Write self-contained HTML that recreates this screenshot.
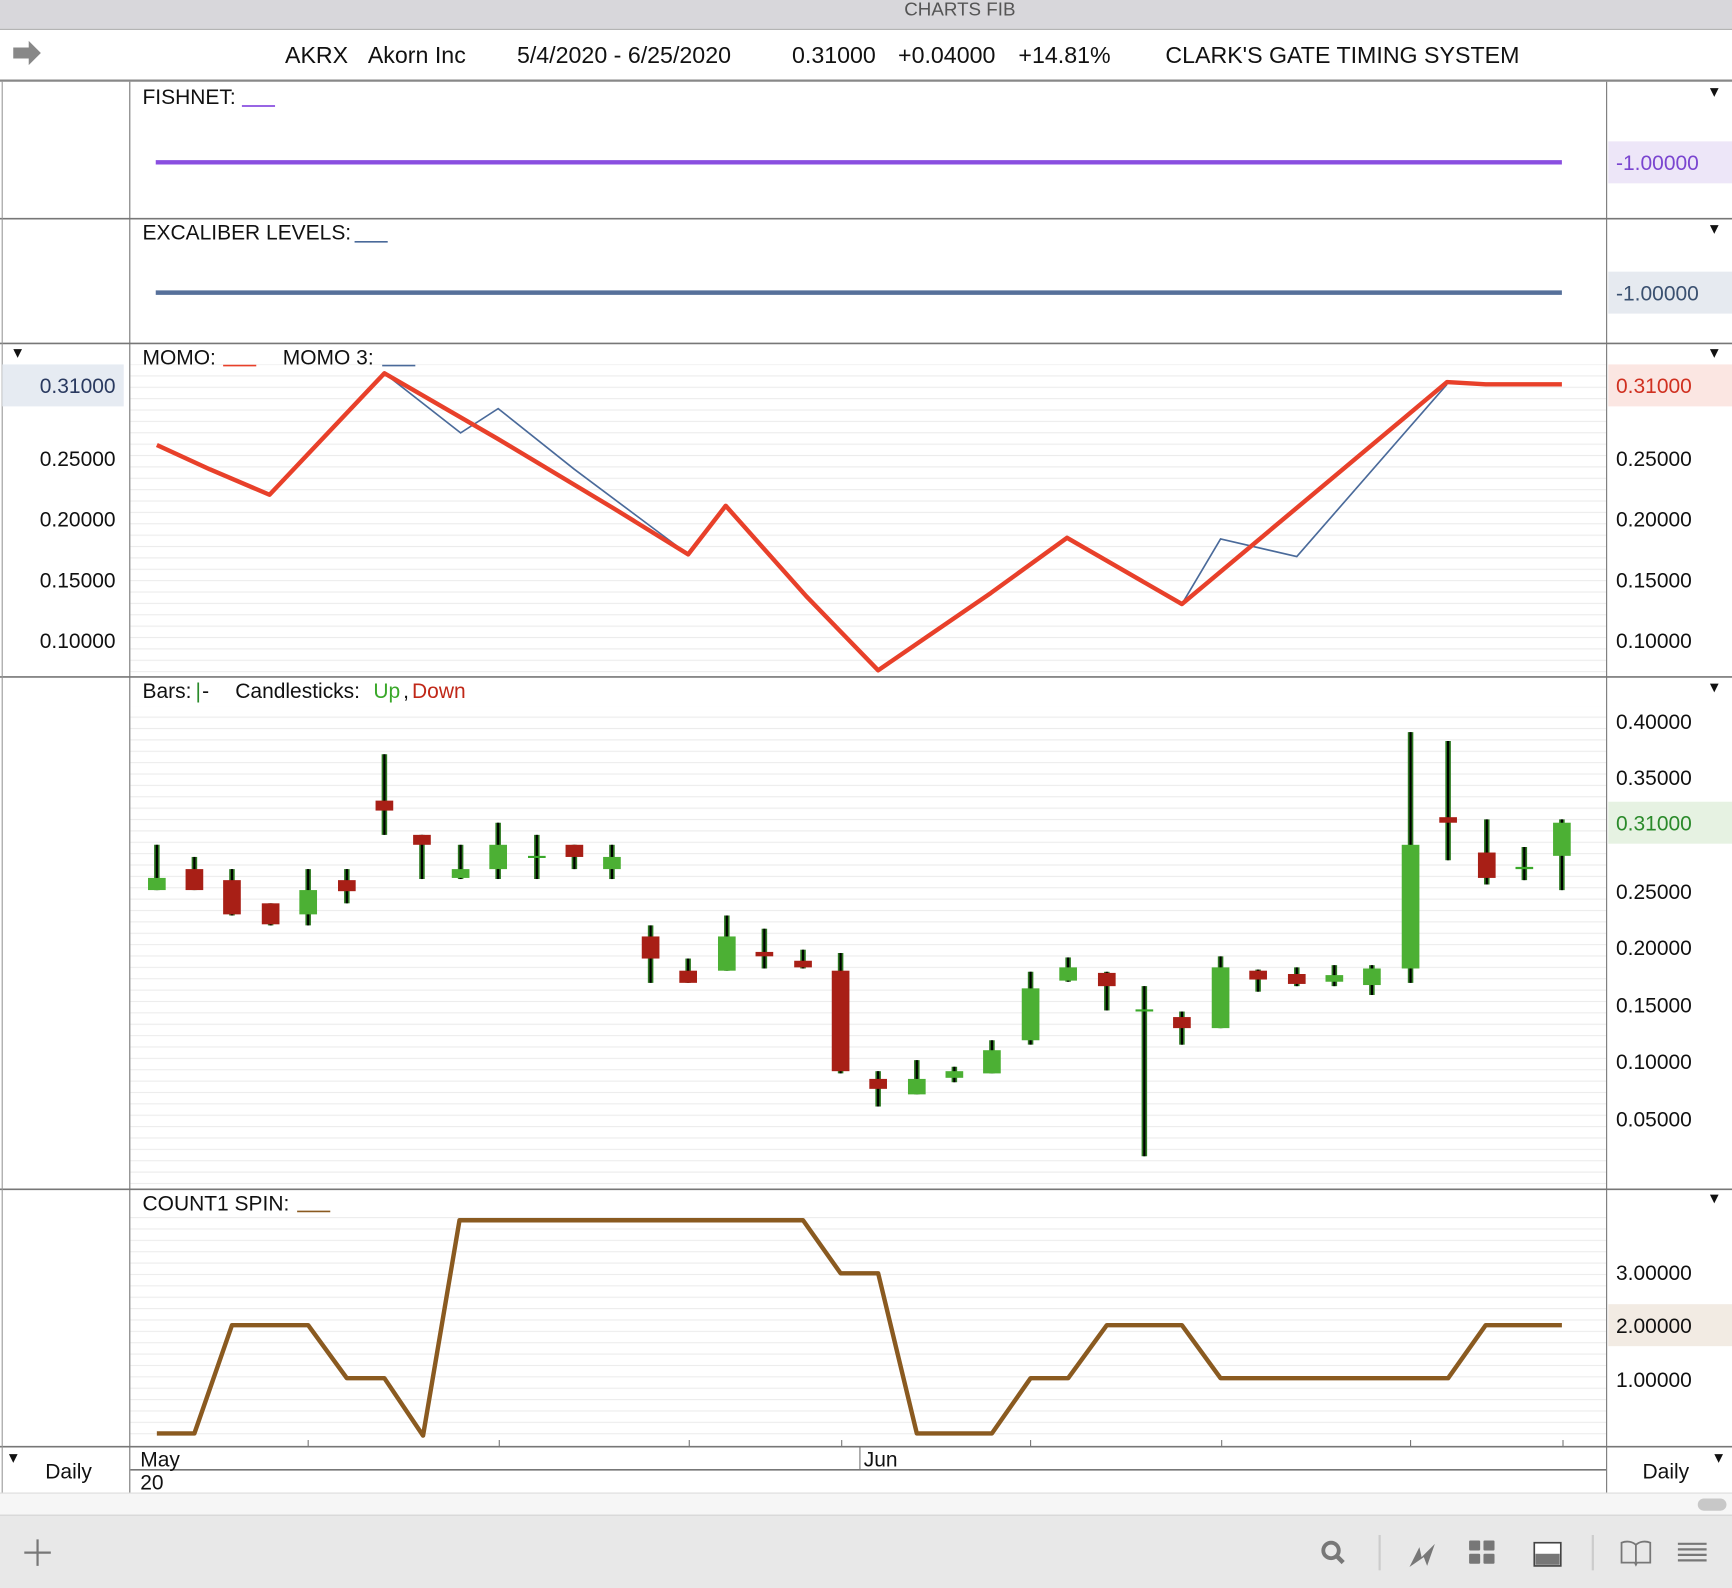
<!DOCTYPE html>
<html><head><meta charset="utf-8"><style>
html,body{margin:0;padding:0;background:#fff;}
svg{display:block;}
text{font-family:"Liberation Sans",Arial,sans-serif;}
</style></head><body>
<svg width="1732" height="1588" viewBox="0 0 1568 1438" preserveAspectRatio="none" xmlns="http://www.w3.org/2000/svg">
<defs>
<pattern id="g" width="10" height="10.3" patternUnits="userSpaceOnUse"><line x1="0" y1="0.5" x2="10" y2="0.5" stroke="#ececec" stroke-width="1"/></pattern>
</defs>
<rect width="1568" height="1438" fill="#fff"/>
<rect width="1568" height="26" fill="#d8d7db"/>
<text x="869" y="14" font-size="17" fill="#555" text-anchor="middle">CHARTS FIB</text>
<line x1="0" y1="26.5" x2="1568" y2="26.5" stroke="#aaa"/>
<path d="M12 43h14v-6l11 11-11 11v-6h-14z" fill="#888"/>
<g font-size="21" fill="#111">
<text x="258" y="57">AKRX</text><text x="333" y="57">Akorn Inc</text>
<text x="468" y="57">5/4/2020 - 6/25/2020</text>
<text x="717" y="57">0.31000</text><text x="813" y="57">+0.04000</text><text x="922" y="57">+14.81%</text>
<text x="1055" y="57">CLARK'S GATE TIMING SYSTEM</text></g>
<line x1="0" y1="73" x2="1568" y2="73" stroke="#888" stroke-width="2"/>
<rect x="118" y="330" width="1336" height="282" fill="url(#g)"/>
<rect x="118" y="640" width="1336" height="436" fill="url(#g)"/>
<rect x="118" y="1100" width="1336" height="208" fill="url(#g)"/>
<line x1="117.5" y1="74" x2="117.5" y2="1352" stroke="#777"/>
<line x1="1454.5" y1="74" x2="1454.5" y2="1352" stroke="#777"/>
<g stroke="#777" stroke-width="1.5">
<line x1="0" y1="198" x2="1568" y2="198"/><line x1="0" y1="311" x2="1568" y2="311"/>
<line x1="0" y1="613" x2="1568" y2="613"/><line x1="0" y1="1077" x2="1568" y2="1077"/>
<line x1="0" y1="1310" x2="1568" y2="1310"/><line x1="118" y1="1331" x2="1454" y2="1331"/></g>
<line x1="2" y1="74" x2="2" y2="1352" stroke="#999"/>
<text x="129" y="94" font-size="19" fill="#111">FISHNET:</text><line x1="219" y1="96" x2="249" y2="96" stroke="#8a4fe0" stroke-width="1.5"/>
<line x1="141" y1="147" x2="1414" y2="147" stroke="#8a4fe0" stroke-width="4"/>
<rect x="1456" y="128" width="112" height="38" fill="#ede6f8"/>
<text x="1463" y="154" font-size="19" fill="#7a45d0">-1.00000</text>
<text x="129" y="217" font-size="19" fill="#111">EXCALIBER LEVELS:</text><line x1="321" y1="219" x2="351" y2="219" stroke="#4a6a9a" stroke-width="1.5"/>
<line x1="141" y1="265" x2="1414" y2="265" stroke="#56709a" stroke-width="4"/>
<rect x="1456" y="246" width="112" height="38" fill="#e6eaf0"/>
<text x="1463" y="272" font-size="19" fill="#3a5070">-1.00000</text>
<g font-size="16" fill="#111"><text x="1548" y="88">▾</text><text x="1548" y="212">▾</text><text x="1548" y="324">▾</text><text x="12" y="324">▾</text><text x="1548" y="627">▾</text><text x="1548" y="1090">▾</text><text x="8" y="1325">▾</text><text x="1552" y="1325">▾</text></g>
<text x="129" y="330" font-size="19" fill="#111">MOMO:</text><line x1="202" y1="331" x2="232" y2="331" stroke="#e8402a" stroke-width="1.5"/>
<text x="256" y="330" font-size="19" fill="#111">MOMO 3:</text><line x1="346" y1="331" x2="376" y2="331" stroke="#4a6a9a" stroke-width="1.5"/>
<rect x="2" y="330" width="110" height="38" fill="#e6ebf2"/>
<text x="36" y="356" font-size="19" fill="#2a3a60">0.31000</text>
<rect x="1456" y="330" width="112" height="38" fill="#fbe6e2"/>
<text x="1463" y="356" font-size="19" fill="#d03020">0.31000</text>
<g font-size="19" fill="#111">
<text x="36" y="422">0.25000</text><text x="36" y="477">0.20000</text><text x="36" y="532">0.15000</text><text x="36" y="587">0.10000</text>
<text x="1463" y="422">0.25000</text><text x="1463" y="477">0.20000</text><text x="1463" y="532">0.15000</text><text x="1463" y="587">0.10000</text></g>
<polyline fill="none" stroke="#4a6a9a" stroke-width="1.5" points="348,338 417,392 451,370 520,425 623,502"/>
<polyline fill="none" stroke="#4a6a9a" stroke-width="1.5" points="1070,547 1105,488 1174,504 1310,348"/>
<polyline fill="none" stroke="#e8402a" stroke-width="4" stroke-linejoin="round" points="142,403 190,425 244,448 348,338 450,397 555,460 623,502 657,458 730,540 795,607 897,537 966,487 1070,547 1310,346 1345,348 1414,348"/>
<text x="129" y="632" font-size="19" fill="#111">Bars:</text><text x="177" y="632" font-size="19" fill="#2a8a2a">|</text><text x="183" y="632" font-size="19" fill="#111">-</text>
<text x="213" y="632" font-size="19" fill="#111">Candlesticks:</text><text x="338" y="632" font-size="19" fill="#3aa82a">Up</text><text x="365" y="632" font-size="19" fill="#111">,</text><text x="373" y="632" font-size="19" fill="#c02818">Down</text>
<g font-size="19" fill="#111"><text x="1463" y="660">0.40000</text><text x="1463" y="711">0.35000</text><text x="1463" y="814">0.25000</text><text x="1463" y="865">0.20000</text><text x="1463" y="917">0.15000</text><text x="1463" y="968">0.10000</text><text x="1463" y="1020">0.05000</text></g>
<rect x="1456" y="726" width="112" height="38" fill="#e6f2e2"/>
<text x="1463" y="752" font-size="19" fill="#2a8a2a">0.31000</text>
<!-- wicks -->
<g stroke="#2e7a22" stroke-width="5">
<line x1="142" y1="765" x2="142" y2="806"/><line x1="176" y1="776" x2="176" y2="806"/><line x1="210" y1="787" x2="210" y2="829"/><line x1="245" y1="818" x2="245" y2="838"/><line x1="279" y1="787" x2="279" y2="838"/><line x1="314" y1="787" x2="314" y2="818"/><line x1="348" y1="683" x2="348" y2="756"/><line x1="382" y1="756" x2="382" y2="796"/><line x1="417" y1="765" x2="417" y2="796"/><line x1="451" y1="745" x2="451" y2="796"/><line x1="486" y1="756" x2="486" y2="796"/><line x1="520" y1="765" x2="520" y2="787"/><line x1="554" y1="765" x2="554" y2="796"/>
<line x1="589" y1="838" x2="589" y2="890"/><line x1="623" y1="868" x2="623" y2="890"/><line x1="658" y1="829" x2="658" y2="879"/><line x1="692" y1="841" x2="692" y2="877"/><line x1="727" y1="860" x2="727" y2="877"/><line x1="761" y1="863" x2="761" y2="972"/><line x1="795" y1="970" x2="795" y2="1002"/><line x1="830" y1="960" x2="830" y2="991"/><line x1="864" y1="966" x2="864" y2="980"/><line x1="898" y1="942" x2="898" y2="972"/><line x1="933" y1="880" x2="933" y2="946"/><line x1="967" y1="867" x2="967" y2="889"/><line x1="1002" y1="880" x2="1002" y2="915"/><line x1="1036" y1="893" x2="1036" y2="1047"/><line x1="1070" y1="916" x2="1070" y2="946"/><line x1="1105" y1="866" x2="1105" y2="931"/><line x1="1139" y1="878" x2="1139" y2="898"/><line x1="1174" y1="876" x2="1174" y2="893"/><line x1="1208" y1="874" x2="1208" y2="893"/><line x1="1242" y1="874" x2="1242" y2="901"/><line x1="1277" y1="663" x2="1277" y2="890"/><line x1="1311" y1="671" x2="1311" y2="779"/><line x1="1346" y1="742" x2="1346" y2="801"/><line x1="1380" y1="767" x2="1380" y2="797"/><line x1="1414" y1="742" x2="1414" y2="806"/>
</g>
<g stroke="#000" stroke-width="2">
<line x1="142" y1="765" x2="142" y2="806"/><line x1="176" y1="776" x2="176" y2="806"/><line x1="210" y1="787" x2="210" y2="829"/><line x1="245" y1="818" x2="245" y2="838"/><line x1="279" y1="787" x2="279" y2="838"/><line x1="314" y1="787" x2="314" y2="818"/><line x1="348" y1="683" x2="348" y2="756"/><line x1="382" y1="756" x2="382" y2="796"/><line x1="417" y1="765" x2="417" y2="796"/><line x1="451" y1="745" x2="451" y2="796"/><line x1="486" y1="756" x2="486" y2="796"/><line x1="520" y1="765" x2="520" y2="787"/><line x1="554" y1="765" x2="554" y2="796"/>
<line x1="589" y1="838" x2="589" y2="890"/><line x1="623" y1="868" x2="623" y2="890"/><line x1="658" y1="829" x2="658" y2="879"/><line x1="692" y1="841" x2="692" y2="877"/><line x1="727" y1="860" x2="727" y2="877"/><line x1="761" y1="863" x2="761" y2="972"/><line x1="795" y1="970" x2="795" y2="1002"/><line x1="830" y1="960" x2="830" y2="991"/><line x1="864" y1="966" x2="864" y2="980"/><line x1="898" y1="942" x2="898" y2="972"/><line x1="933" y1="880" x2="933" y2="946"/><line x1="967" y1="867" x2="967" y2="889"/><line x1="1002" y1="880" x2="1002" y2="915"/><line x1="1036" y1="893" x2="1036" y2="1047"/><line x1="1070" y1="916" x2="1070" y2="946"/><line x1="1105" y1="866" x2="1105" y2="931"/><line x1="1139" y1="878" x2="1139" y2="898"/><line x1="1174" y1="876" x2="1174" y2="893"/><line x1="1208" y1="874" x2="1208" y2="893"/><line x1="1242" y1="874" x2="1242" y2="901"/><line x1="1277" y1="663" x2="1277" y2="890"/><line x1="1311" y1="671" x2="1311" y2="779"/><line x1="1346" y1="742" x2="1346" y2="801"/><line x1="1380" y1="767" x2="1380" y2="797"/><line x1="1414" y1="742" x2="1414" y2="806"/>
</g>
<!-- green bodies -->
<g fill="#4cb034">
<rect x="134" y="795" width="16" height="11"/><rect x="271" y="806" width="16" height="22"/><rect x="409" y="787" width="16" height="8"/><rect x="443" y="765" width="16" height="22"/><rect x="546" y="776" width="16" height="11"/>
<rect x="650" y="848" width="16" height="31"/><rect x="822" y="977" width="16" height="14"/><rect x="856" y="970" width="16" height="6"/><rect x="890" y="951" width="16" height="21"/><rect x="925" y="895" width="16" height="47"/><rect x="959" y="876" width="16" height="12"/><rect x="1097" y="876" width="16" height="55"/><rect x="1200" y="883" width="16" height="6"/><rect x="1234" y="877" width="16" height="15"/><rect x="1269" y="765" width="16" height="112"/><rect x="1406" y="745" width="16" height="30"/>
</g>
<g fill="#a81f16">
<rect x="168" y="787" width="16" height="19"/><rect x="202" y="797" width="16" height="31"/><rect x="237" y="818" width="16" height="19"/><rect x="306" y="797" width="16" height="10"/><rect x="340" y="725" width="16" height="9"/><rect x="374" y="756" width="16" height="9"/><rect x="512" y="765" width="16" height="11"/>
<rect x="581" y="848" width="16" height="20"/><rect x="615" y="879" width="16" height="11"/><rect x="684" y="862" width="16" height="4"/><rect x="719" y="870" width="16" height="6"/><rect x="753" y="879" width="16" height="91"/><rect x="787" y="977" width="16" height="9"/><rect x="994" y="881" width="16" height="12"/><rect x="1062" y="921" width="16" height="10"/><rect x="1131" y="879" width="16" height="8"/><rect x="1166" y="882" width="16" height="9"/><rect x="1303" y="740" width="16" height="5"/><rect x="1338" y="772" width="16" height="23"/>
</g>
<g stroke="#3aa82a" stroke-width="2"><line x1="478" y1="776" x2="494" y2="776"/><line x1="1028" y1="915" x2="1044" y2="915"/><line x1="1372" y1="786" x2="1388" y2="786"/></g>
<text x="129" y="1096" font-size="19" fill="#111">COUNT1 SPIN:</text><line x1="269" y1="1097" x2="299" y2="1097" stroke="#8a5a20" stroke-width="1.5"/>
<rect x="1456" y="1181" width="112" height="38" fill="#f2ebe3"/>
<g font-size="19" fill="#111"><text x="1463" y="1159">3.00000</text><text x="1463" y="1207">2.00000</text><text x="1463" y="1256">1.00000</text></g>
<polyline fill="none" stroke="#8a5a20" stroke-width="4" stroke-linejoin="round" points="142,1298 176,1298 210,1200 279,1200 314,1248 348,1248 383,1300 416,1105 727,1105 761,1153 795,1153 830,1298 898,1298 933,1248 967,1248 1002,1200 1070,1200 1105,1248 1311,1248 1345,1200 1414,1200"/>
<g stroke="#777"><line x1="279" y1="1304" x2="279" y2="1310"/><line x1="452" y1="1304" x2="452" y2="1310"/><line x1="624" y1="1304" x2="624" y2="1310"/><line x1="762" y1="1304" x2="762" y2="1310"/><line x1="933" y1="1304" x2="933" y2="1310"/><line x1="1106" y1="1304" x2="1106" y2="1310"/><line x1="1277" y1="1304" x2="1277" y2="1310"/><line x1="1415" y1="1304" x2="1415" y2="1310"/><line x1="778.5" y1="1310" x2="778.5" y2="1331"/></g>
<g font-size="19" fill="#111"><text x="127" y="1328">May</text><text x="127" y="1349">20</text><text x="782" y="1328">Jun</text><text x="41" y="1339">Daily</text><text x="1487" y="1339">Daily</text></g>
<rect x="0" y="1352" width="1568" height="20" fill="#f6f6f6"/>
<line x1="0" y1="1352" x2="1568" y2="1352" stroke="#ddd"/>
<rect x="1537" y="1357" width="26" height="11" rx="5.5" fill="#c8c8c8"/>
<rect x="0" y="1372" width="1568" height="66" fill="#e8e8e8"/>
<line x1="0" y1="1372" x2="1568" y2="1372" stroke="#d0d0d0"/>
<path d="M34 1394v24M22 1406h24" stroke="#777" stroke-width="2"/>
<circle cx="1205" cy="1404" r="7" fill="none" stroke="#777" stroke-width="3.5"/><line x1="1210" y1="1409" x2="1216" y2="1415" stroke="#777" stroke-width="4"/>
<line x1="1249" y1="1390" x2="1249" y2="1422" stroke="#ccc" stroke-width="2"/>
<line x1="1442" y1="1390" x2="1442" y2="1422" stroke="#ccc" stroke-width="2"/>
<path d="M1276 1419l9-18 2 9 12-12-7 20-3-8z" fill="#777"/>
<g fill="#777"><rect x="1330" y="1395" width="10" height="9" rx="1"/><rect x="1343" y="1395" width="10" height="9" rx="1"/><rect x="1330" y="1407" width="10" height="9" rx="1"/><rect x="1343" y="1407" width="10" height="9" rx="1"/></g>
<rect x="1389" y="1397" width="24" height="21" fill="#fff" stroke="#444" stroke-width="1.5"/><rect x="1390" y="1407" width="22" height="10" fill="#777"/>
<path d="M1468 1397v18h12l1 2 1-2h12v-18c-5-2-10-1-13 2c-3-3-8-4-13-2zM1481 1399v16" fill="none" stroke="#777" stroke-width="1.6"/>
<g stroke="#777" stroke-width="2"><line x1="1519" y1="1398" x2="1545" y2="1398"/><line x1="1519" y1="1403" x2="1545" y2="1403"/><line x1="1519" y1="1408" x2="1545" y2="1408"/><line x1="1519" y1="1413" x2="1545" y2="1413"/></g>
</svg>
</body></html>
